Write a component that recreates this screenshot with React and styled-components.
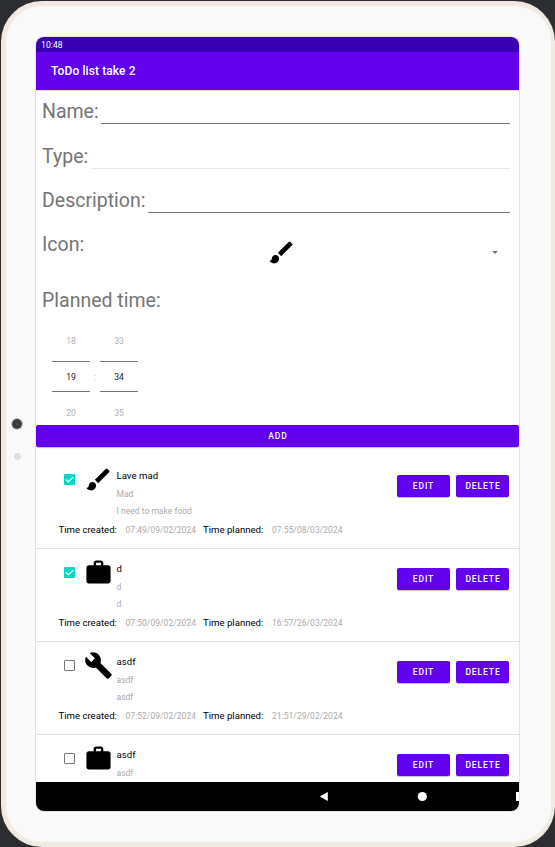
import React from "react";
import styled, { createGlobalStyle } from "styled-components";
import { MdBrush, MdBuild, MdWork } from "react-icons/md";

const PURPLE = "#6200ee";

const GlobalStyle = createGlobalStyle`
  * { box-sizing: border-box; }
  html, body { margin: 0; background: #2b2d30; overflow: hidden; }
  body { font-family: Roboto, "Liberation Sans", sans-serif; }
`;

const Backdrop = styled.main`
  width: 555px;
  height: 847px;
  padding: 1px 0 0 1px;
  overflow: hidden;
  background: #2b2d30;
`;

const Tablet = styled.div`
  position: relative;
  width: 553.5px;
  height: 846px;
  padding: 32px 31px;
  border: 4px solid #f0ebe1;
  border-top-color: #f4e8e3;
  border-left-color: #f3e9e1;
  border-right-width: 3px;
  border-radius: 41px;
  background: #f9f9f9;
  box-shadow: inset 0 0 0 1px #eeebe5;
`;

const Camera = styled.span`
  position: absolute;
  left: 7px;
  top: 414px;
  width: 10px;
  height: 10px;
  border-radius: 50%;
  background: radial-gradient(circle, #5c5655 0 0.5px, #3b3b3b 1px);
  box-shadow: 0 0 0 1px #c9c9c9;
`;

const Sensor = styled.span`
  position: absolute;
  left: 8.5px;
  top: 448px;
  width: 7px;
  height: 7px;
  border-radius: 50%;
  background: #dedede;
`;

const Screen = styled.div`
  display: flex;
  flex-direction: column;
  width: 483px;
  height: 774px;
  overflow: hidden;
  border-radius: 8px;
  background: #fff;
  box-shadow: 0 0 0 1px #e4e4e4;
`;

const StatusBar = styled.div`
  flex: none;
  height: 14.5px;
  padding-left: 5px;
  background: #3700b3;
  color: #fff;
  font-size: 8.5px;
  line-height: 16px;
  letter-spacing: 0.1px;
`;

const AppBar = styled.header`
  flex: none;
  display: flex;
  align-items: center;
  height: 38.5px;
  padding: 1px 0 0 15px;
  background: ${PURPLE};
  color: #fff;
  font-size: 12px;
  font-weight: 500;
  letter-spacing: 0.1px;
  box-shadow: 0 1px 1px #ddd;
`;

const Form = styled.form`
  flex: none;
  display: flex;
  flex-direction: column;
  height: 335px;
`;

const Field = styled.div`
  display: flex;
  flex: none;
  height: ${(p) => p.$height}px;
  padding: 9px 9px 0 6px;
`;

const Label = styled.label`
  flex: none;
  height: 24px;
  color: #757575;
  font-size: 19.5px;
  line-height: 25px;
  white-space: nowrap;
`;

const Input = styled.div`
  flex: 1;
  height: 25px;
  margin-left: 2.5px;
  border-bottom: 1px solid ${(p) => (p.$faint ? "#e9e9e9" : "#777")};
`;

const IconSelect = styled.div`
  display: flex;
  flex: 1;
  align-items: center;
  justify-content: flex-end;
  height: 40px;
`;

const SelectArrow = styled.span`
  margin: 1px 12px 0 196px;
  border: 3px solid transparent;
  border-top-color: #757575;
  border-bottom: 0;
`;

const TimePicker = styled.div`
  display: flex;
  align-items: center;
  padding-left: 16px;
  margin-top: 8px;
  color: #b0b0b0;
  font-size: 8.5px;
`;

const Colon = styled.span`
  width: 10px;
  text-align: center;
`;

const Wheel = styled.div`
  display: grid;
  grid-template-rows: 36px 36px 36px;
  width: 38px;
  text-align: center;
  line-height: 36px;
`;

const Selected = styled.div`
  height: 31px;
  margin-top: 2px;
  border: solid #777;
  border-width: 1px 0;
  color: #222;
  line-height: 31px;
`;

const Button = styled.button`
  flex: none;
  width: ${(p) => p.$width}px;
  height: 21.5px;
  padding: 0 0 0 1px;
  border: 0;
  border-radius: 2px;
  background: ${PURPLE};
  color: #fff;
  font-family: inherit;
  font-size: 8.5px;
  font-weight: 500;
  letter-spacing: 0.9px;
  line-height: 22px;
  text-align: center;
  box-shadow: 0 1px 1px rgba(0, 0, 0, 0.25);
`;

const List = styled.div`
  flex: 1;
  min-height: 0;
  padding-top: 9px;
  overflow: hidden;
`;

const Item = styled.article`
  height: 93.15px;
  padding-right: 10px;
  border-bottom: 1px solid #e2e2e2;
`;

const ItemMain = styled.div`
  display: flex;
  height: 65px;
  padding: 10px 0 0 28px;
`;

const Checkbox = styled.span`
  display: grid;
  flex: none;
  place-items: center;
  width: 11px;
  height: 11px;
  margin: 8.3px 9.5px 0 0;
  border: ${(p) => (p.$checked ? "0" : "1.5px solid #777")};
  border-radius: 1px;
  background: ${(p) => (p.$checked ? "#03dac5" : "#fff")};
`;

const ItemIcon = styled.span`
  display: flex;
  flex: none;
  width: 33px;
  margin: -1px 0 0 -1px;
  color: #000;
`;

const Details = styled.div`
  flex: 1;
  color: #aaa;
  font-size: 8.5px;
  line-height: 17.6px;
  letter-spacing: 0.02px;
`;

const ItemTitle = styled.div`
  padding-bottom: 1px;
  color: #000;
  font-size: 9.6px;
  line-height: 19px;
`;

const Actions = styled.div`
  display: flex;
  gap: 6.5px;
  padding-top: 9.5px;
`;

const Times = styled.div`
  display: grid;
  grid-template-columns: 67px 77.5px 69px auto;
  padding-left: 22.5px;
  line-height: 17px;
  white-space: nowrap;
`;

const TimeLabel = styled.span`
  color: #000;
  font-size: 9.6px;
`;

const TimeValue = styled.span`
  color: #aaa;
  font-size: 8.5px;
  letter-spacing: 0.04px;
  line-height: 18px;
`;

const NavBar = styled.nav`
  display: flex;
  flex: none;
  align-items: center;
  justify-content: flex-end;
  height: 29px;
  background: #000;
`;

const icons = { brush: MdBrush, work: MdWork, build: MdBuild };

const tasks = [
  { icon: "brush", done: true, name: "Lave mad", type: "Mad", text: "I need to make food", created: "07:49/09/02/2024", planned: "07:55/08/03/2024" },
  { icon: "work", done: true, name: "d", type: "d", text: "d", created: "07:50/09/02/2024", planned: "16:57/26/03/2024" },
  { icon: "build", done: false, name: "asdf", type: "asdf", text: "asdf", created: "07:52/09/02/2024", planned: "21:51/29/02/2024" },
  { icon: "work", done: false, name: "asdf", type: "asdf" },
];

function NumberWheel({ values }) {
  return (
    <Wheel>
      <span>{values[0]}</span>
      <Selected>{values[1]}</Selected>
      <span>{values[2]}</span>
    </Wheel>
  );
}

function Task({ task }) {
  const Icon = icons[task.icon];
  return (
    <Item>
      <ItemMain>
        <Checkbox $checked={task.done}>
          {task.done && (
            <svg width="11" height="11" viewBox="0 0 11 11" fill="none" stroke="#fff" strokeWidth="1.3">
              <path d="M2 5.5 4.4 7.9 9.2 3.1" />
            </svg>
          )}
        </Checkbox>
        <ItemIcon><Icon size={29} /></ItemIcon>
        <Details>
          <ItemTitle>{task.name}</ItemTitle>
          <div>{task.type}</div>
          <div>{task.text}</div>
        </Details>
        <Actions>
          <Button type="button" $width={53}>EDIT</Button>
          <Button type="button" $width={53}>DELETE</Button>
        </Actions>
      </ItemMain>
      {task.created && (
        <Times>
          <TimeLabel>Time created:</TimeLabel>
          <TimeValue>{task.created}</TimeValue>
          <TimeLabel>Time planned:</TimeLabel>
          <TimeValue>{task.planned}</TimeValue>
        </Times>
      )}
    </Item>
  );
}

export default function App() {
  return (
    <Backdrop>
      <GlobalStyle />
      <Tablet>
        <Camera />
        <Sensor />
        <Screen>
          <StatusBar>10:48</StatusBar>
          <AppBar>ToDo list take 2</AppBar>
          <Form>
            <Field $height={44.5}><Label>Name:</Label><Input /></Field>
            <Field $height={44}><Label>Type:</Label><Input $faint /></Field>
            <Field $height={44.5}><Label>Description:</Label><Input /></Field>
            <Field $height={56}>
              <Label>Icon:</Label>
              <IconSelect><MdBrush size={29} /><SelectArrow /></IconSelect>
            </Field>
            <Field $height={36}><Label>Planned time:</Label></Field>
            <TimePicker>
              <NumberWheel values={["18", "19", "20"]} />
              <Colon>:</Colon>
              <NumberWheel values={["33", "34", "35"]} />
            </TimePicker>
          </Form>
          <Button type="button" $width={483}>ADD</Button>
          <List>
            {tasks.map((task, i) => <Task key={i} task={task} />)}
          </List>
          <NavBar>
            <svg width="200" height="29" viewBox="0 0 200 29" fill="#fff">
              <path d="M0.8 14.5 8.8 10V19Z" />
              <circle cx="103.3" cy="14.5" r="4.6" />
              <path d="M197 10h9v9h-9z" />
            </svg>
          </NavBar>
        </Screen>
      </Tablet>
    </Backdrop>
  );
}
